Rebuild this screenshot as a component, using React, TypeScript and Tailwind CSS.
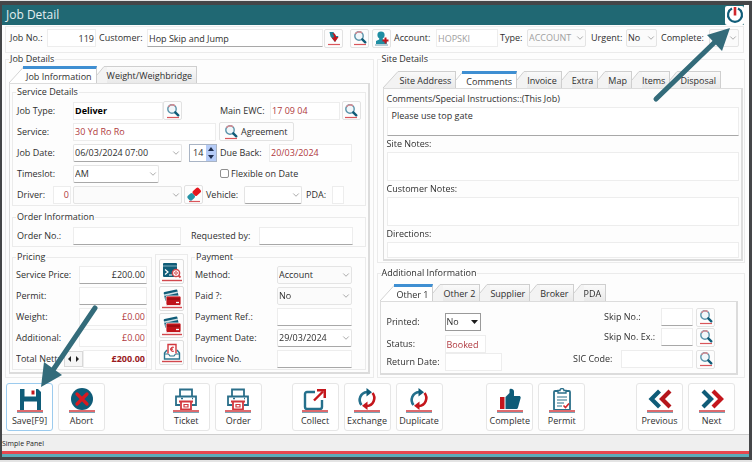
import React from "react";
import { ChevronDown } from "lucide-react";

type Kids = { children?: React.ReactNode };

const TEAL = "#0f5c78";
const RED = "#c4161c";

/* ---------- icons ---------- */

function SearchIcon() {
  return (
    <svg viewBox="0 0 16 16" className="h-4 w-4" fill="none" aria-hidden="true">
      <circle cx="7" cy="6" r="4.200" stroke="#5b93aa" strokeWidth="1.400" fill="#f1f7fa" />
      <path d="M3.500 3.800A4.200 4.200 0 0 1 10 3" stroke="#d98a90" strokeWidth="1.400" />
      <path d="M10.300 9.300l3 3" stroke={TEAL} strokeWidth="2.400" strokeLinecap="round" />
      <path d="M2 14.500h12" stroke="#d9565b" strokeWidth="1.200" />
    </svg>
  );
}

function DownArrowIcon() {
  return (
    <svg viewBox="0 0 16 16" className="h-4 w-4" aria-hidden="true">
      <path d="M3.500 2h4l2 4h3L9 12 4.500 6.500z" fill="#1b8296" />
      <path d="M6 3c3 0 4 2 4 4h2.500L9 12 5.500 7.500H8C8 5.500 7.500 4 6 3z" fill={RED} />
      <path d="M2 14.500h12" stroke="#d9565b" strokeWidth="1.200" />
    </svg>
  );
}

function PersonIcon() {
  return (
    <svg viewBox="0 0 16 16" className="h-4 w-4" aria-hidden="true">
      <circle cx="7" cy="5" r="3.600" fill="#1f8ea3" />
      <path d="M5.200 7h3.600v2.500l4 1.500v3H2v-3l3.200-1.500z" fill="#1f8ea3" />
      <path d="M11.500 7.500v6M8.500 10.500h6" stroke={RED} strokeWidth="2" />
      <path d="M1 15h13" stroke="#6f9fb0" strokeWidth="1" />
    </svg>
  );
}

function EraserIcon() {
  return (
    <svg viewBox="0 0 16 16" className="h-4 w-4" aria-hidden="true">
      <g transform="rotate(-42 8 7)">
        <rect x="0.500" y="4.200" width="7" height="6" rx="1.800" fill="#2593a6" />
        <rect x="7.500" y="4.200" width="8" height="6" rx="1.800" fill="#e5161d" />
      </g>
      <path d="M3 14.500h11" stroke="#d9565b" strokeWidth="1.200" />
    </svg>
  );
}

function PowerIcon() {
  return (
    <svg viewBox="0 0 18 18" className="h-[18px] w-[18px]" fill="none" aria-hidden="true">
      <path d="M6 2.500a7 7 0 1 0 6 0" stroke={TEAL} strokeWidth="2.200" />
      <path d="M9 1v8.500" stroke="#d0262c" strokeWidth="2.600" />
    </svg>
  );
}

function TerminalIcon() {
  return (
    <svg viewBox="0 0 22 22" className="h-[22px] w-[22px]" fill="none" aria-hidden="true">
      <rect x="2" y="2" width="14" height="14" rx="1" fill={TEAL} />
      <path d="M2 5h14" stroke="#9cc3d0" strokeWidth="0.800" />
      <path d="M4 8.500l3 2.500-3 2.500M8 14h3" stroke="#fff" strokeWidth="1.200" />
      <circle cx="15" cy="12" r="3.600" fill="#fff" stroke="#d2474d" strokeWidth="1.500" />
      <circle cx="15" cy="12" r="1.300" stroke="#d2474d" strokeWidth="1" />
      <path d="M17.500 14.500l2 2" stroke="#d2474d" strokeWidth="1.800" />
      <path d="M1 19.500h20" stroke="#d2474d" strokeWidth="1.400" />
    </svg>
  );
}

function CardsIcon() {
  return (
    <svg viewBox="0 0 22 22" className="h-[22px] w-[22px]" fill="none" aria-hidden="true">
      <g transform="rotate(-12 9 6)">
        <rect x="3" y="3" width="14" height="9" rx="1" fill={TEAL} />
        <path d="M3 6h14" stroke="#cfe2e8" strokeWidth="1.600" />
      </g>
      <rect x="5" y="8" width="15" height="9.500" rx="1.500" fill="#c0141b" stroke="#fff" strokeWidth="0.800" />
      <path d="M6 11h13" stroke="#8d0b10" strokeWidth="1.200" />
      <path d="M15 14.500h3" stroke="#fff" strokeWidth="1.300" />
      <path d="M1 19.500h20" stroke="#d2474d" strokeWidth="1.400" />
    </svg>
  );
}

function InvoiceTrayIcon() {
  return (
    <svg viewBox="0 0 22 22" className="h-[22px] w-[22px]" fill="none" aria-hidden="true">
      <path d="M6 8L3.500 11v6h15v-6L16 8" stroke="#2b7690" strokeWidth="1.400" />
      <path d="M3.500 12h4l1.500 2h4l1.500-2h4" stroke="#2b7690" strokeWidth="1.200" />
      <path d="M7 11.500V2.500h8v9" stroke="#d2373d" strokeWidth="1.400" fill="#fff" />
      <path d="M12.800 5.500a2 2 0 1 0 0 3.500M9 7.200h3" stroke="#d2373d" strokeWidth="1.200" />
      <path d="M1 19.500h20" stroke="#d2474d" strokeWidth="1.400" />
    </svg>
  );
}

function SaveGlyph() {
  return (
    <>
      <path d="M3 1h18l3 3v18H3z" fill={TEAL} />
      <path d="M7.500 1h11.500v7.500H7.500z" fill="#fff" />
      <path d="M14.500 2.500h3v4h-3z" fill={RED} />
      <path d="M7 13.500h13V22H7z" fill="#fff" />
    </>
  );
}

function AbortGlyph() {
  return (
    <>
      <circle cx="13" cy="11" r="11" fill={TEAL} />
      <path d="M8 6l10 10M18 6L8 16" stroke="#d81a20" strokeWidth="3.200" strokeLinecap="round" />
    </>
  );
}

function PrinterGlyph() {
  return (
    <>
      <path d="M7 8V1.500h12V8" stroke="#2b6f8a" strokeWidth="1.800" />
      <path d="M7 17H3V8.500h20V17h-4" stroke="#2b6f8a" strokeWidth="1.800" />
      <path d="M8 10.500h2M19 10.500h1" stroke="#2b6f8a" strokeWidth="1.400" />
      <path d="M6 13.500h14M8 13.500v8h10v-8" stroke="#d2373d" strokeWidth="1.800" />
      <path d="M11 16.500h4v2.500h-4z" stroke="#d2373d" strokeWidth="1.200" />
    </>
  );
}

function CollectGlyph() {
  return (
    <>
      <path d="M13 4H5a2 2 0 0 0-2 2v13a2 2 0 0 0 2 2h13a2 2 0 0 0 2-2v-7" stroke="#25708c" strokeWidth="2.400" />
      <path d="M12 12.500L21 3.500" stroke={RED} strokeWidth="2.400" />
      <path d="M15 1h9v9h-2.500V3.500H15z" fill={RED} />
    </>
  );
}

function CycleGlyph() {
  return (
    <>
      <path d="M7.500 17A8 8 0 0 1 13 4h2" stroke="#25708c" strokeWidth="2.600" />
      <path d="M12.500 0l5.500 4.200-5.500 4.300z" fill={TEAL} />
      <path d="M18.500 5A8 8 0 0 1 13 18h-2" stroke={RED} strokeWidth="2.600" />
      <path d="M13.500 13.500L8 17.800l5.500 4.200z" fill={RED} />
    </>
  );
}

function ThumbGlyph() {
  return (
    <>
      <path d="M3 9h4.500v12H3z" fill={RED} />
      <path d="M8.500 9l4-4V2c0-2 4.500-1.500 4.500 1.500V8h5c1.500 0 2 1.200 1.500 2.500l-2.500 9c-.3 1-1 1.500-2 1.500H8.500z" fill={TEAL} />
    </>
  );
}

function ClipboardGlyph() {
  return (
    <>
      <rect x="5" y="3" width="16" height="19" rx="1" stroke="#2b6f8a" strokeWidth="1.800" />
      <path d="M9 5V2.500h2a2 2 0 0 1 4 0h2V5z" stroke="#2b6f8a" strokeWidth="1.400" fill="#fff" />
      <path d="M8 9h10M8 12h10M8 15h7M8 18h5" stroke="#2b6f8a" strokeWidth="1.200" />
      <path d="M14.500 17.500l2 2 3.500-4" stroke="#d2262c" strokeWidth="1.600" />
    </>
  );
}

function PreviousGlyph() {
  return (
    <>
      <path d="M12.500 3L4.500 11l8 8" stroke={TEAL} strokeWidth="4.200" />
      <path d="M23 3l-8 8 8 8" stroke="#b5151b" strokeWidth="4.200" />
    </>
  );
}

function NextGlyph() {
  return (
    <>
      <path d="M4 3l8 8-8 8" stroke={TEAL} strokeWidth="4.200" />
      <path d="M14 3l8 8-8 8" stroke="#c4161c" strokeWidth="4.200" />
    </>
  );
}

/* ---------- form parts ---------- */

function Group({ title, className = "", children }: Kids & { title: string; className?: string }) {
  return (
    <fieldset className={`min-w-0 border border-[#ebebeb] ${className}`}>
      <legend className="ml-[3px] px-px leading-[12px]">{title}</legend>
      {children}
    </fieldset>
  );
}

type FieldProps = {
  id: string;
  label?: string;
  value?: string;
  className?: string;
  tone?: string;
  line?: boolean;
};

function Field({ id, label, value = "", tone = "", line = false }: FieldProps) {
  return (
    <input
      id={id}
      aria-label={label}
      defaultValue={value}
      className={`h-[18px] min-w-0 border border-[#ededed] bg-white px-px outline-none ${
        line ? "border-b-[#a8a8a8]" : ""
      } ${tone}`}
    />
  );
}

function TextField(props: FieldProps) {
  return (
    <div className={`flex min-w-0 ${props.className ?? ""}`}>
      <Field {...props} tone={`w-full ${props.tone ?? ""}`} />
    </div>
  );
}

function Drop({ id, label, value = "", className = "", tone = "", line = false }: FieldProps) {
  return (
    <div className={`relative min-w-0 ${className}`}>
      <select
        id={id}
        aria-label={label}
        defaultValue={value}
        className={`block h-[18px] w-full appearance-none rounded-[2px] border border-[#e4e4e4] pl-px pr-1 outline-none ${
          line ? "border-b-[#a8a8a8] bg-white" : "bg-[#fbfbfb]"
        } ${tone}`}
      >
        <option>{value}</option>
      </select>
      <ChevronDown className="pointer-events-none absolute right-px top-1 h-[10px] w-[10px] text-[#9a9a9a]" strokeWidth={2} />
    </div>
  );
}

function IconButton({ label, children }: Kids & { label: string }) {
  return (
    <button
      type="button"
      aria-label={label}
      className="flex h-[19px] w-[19px] shrink-0 items-center justify-center rounded-[2px] border border-[#e2e2e2] bg-[#fdfdfd]"
    >
      {children}
    </button>
  );
}

function PayButton({ label, children }: Kids & { label: string }) {
  return (
    <button
      type="button"
      aria-label={label}
      className="flex h-[25px] w-[25px] items-center justify-center rounded-[2px] border border-[#dedede] bg-[#fdfdfd]"
    >
      {children}
    </button>
  );
}

function Tabs({ names, active, label }: { names: string[]; active: string; label: string }) {
  return (
    <div role="tablist" aria-label={label} className="flex h-[17px]">
      {names.map((name, i) => {
        const on = name === active;
        return (
          <button key={name} type="button" role="tab" aria-selected={on} className="flex h-[17px]">
            <svg
              viewBox={i === 0 ? "0 0 17 17" : "0 0 10 17"}
              className={i === 0 ? "h-[17px] w-[17px]" : "h-[17px] w-[10px]"}
              aria-hidden="true"
            >
              <path d={i === 0 ? "M0 17L15 1h2v16z" : "M0 17V9L7 1h3v16z"} fill={on ? "#fff" : "#f3f3f3"} />
              <path
                d={i === 0 ? "M0 17L15 0.500h2" : "M0 9L7 0.500h3"}
                stroke={on ? "#d4d4d4" : "#d0d0d0"}
                fill="none"
              />
              {on && <path d={i === 0 ? "M14 1.500h3" : "M6 1.500h4"} stroke="#3f8fd2" strokeWidth="3" />}
            </svg>
            <span
              className={`h-[17px] border-r border-[#cfcfcf] pr-[4px] ${
                on
                  ? "border-t-[3px] border-t-[#3f8fd2] bg-white leading-[15px]"
                  : "border-t bg-linear-to-b from-[#fafafa] to-[#e9e9e9] leading-[18px]"
              }`}
            >
              {name}
            </span>
          </button>
        );
      })}
    </div>
  );
}

function Memo({ id, label, value = "", last = false, line = false }: { id: string; label: string; value?: string; last?: boolean; line?: boolean }) {
  return (
    <>
      <label htmlFor={id} className="block h-4 leading-[16px]">
        {label}
      </label>
      <textarea
        id={id}
        defaultValue={value}
        className={`block w-full resize-none border border-[#ededed] bg-white px-1 py-[2px] leading-[12px] outline-none ${
          last ? "h-4" : "h-[29px]"
        } ${line ? "border-b-[#a8a8a8]" : ""}`}
      />
    </>
  );
}

function Tool({ label, focus = false, children }: Kids & { label: string; focus?: boolean }) {
  return (
    <button
      type="button"
      className={`flex h-[48px] w-[47px] shrink-0 flex-col items-center rounded-[3px] border bg-white pt-1 ${
        focus ? "border-[#9ccbee]" : "border-[#e6e6e6]"
      }`}
    >
      <svg viewBox="0 0 26 22" className="h-[22px] w-[26px]" fill="none" aria-hidden="true">
        {children}
      </svg>
      <span className="h-[3px] w-[26px] border-b border-t-2 border-b-[#7aa7b8] border-t-[#dc6a6e]" />
      <span className="leading-[15px]">{label}</span>
    </button>
  );
}

const row = "flex h-[21px] items-center";
const red = "text-[#b03a40]";

function ServiceDetails() {
  return (
    <Group title="Service Details">
      <div className="px-1 pt-[2px]">
        <div className={row}>
          <div className="flex w-[203px] shrink-0 items-center">
            <label htmlFor="job-type" className="w-[56px]">Job Type:</label>
            <TextField id="job-type" value="Deliver" className="w-[90px]" tone="font-bold text-black" />
            <IconButton label="Find job type"><SearchIcon /></IconButton>
          </div>
          <label htmlFor="ewc" className="w-[50px] shrink-0">Main EWC:</label>
          <TextField id="ewc" value="17 09 04" className="mr-[2px] flex-1" tone={red} />
          <IconButton label="Find EWC"><SearchIcon /></IconButton>
        </div>
        <div className={row}>
          <label htmlFor="service" className="w-[56px]">Service:</label>
          <TextField id="service" value="30 Yd Ro Ro" className="mr-[3px] w-[143px]" tone={red} />
          <button type="button" className="flex h-[19px] w-[75px] items-center gap-[2px] rounded-[2px] border border-[#e2e2e2] bg-[#fdfdfd] pl-[3px]">
            <SearchIcon />
            Agreement
          </button>
        </div>
        <div className={row}>
          <div className="flex w-[203px] shrink-0 items-center">
            <label htmlFor="job-date" className="w-[56px]">Job Date:</label>
            <Drop id="job-date" value="06/03/2024 07:00" className="mr-[7px] w-[109px]" line />
            <div className="flex h-[18px] w-[28px] border border-[#a9b4c4]">
              <input aria-label="Days on hire" defaultValue="14" className="w-4 min-w-0 bg-white pl-[3px] outline-none" />
              <div className="flex flex-1 flex-col bg-[#b6ccf7]">
                <button type="button" aria-label="More days" className="flex flex-1 items-center justify-center">
                  <svg viewBox="0 0 6 4" className="h-1 w-[6px]"><path d="M3 0l3 4H0z" fill="#1d2c4d" /></svg>
                </button>
                <button type="button" aria-label="Fewer days" className="flex flex-1 items-center justify-center">
                  <svg viewBox="0 0 6 4" className="h-1 w-[6px]"><path d="M3 4l3-4H0z" fill="#1d2c4d" /></svg>
                </button>
              </div>
            </div>
          </div>
          <label htmlFor="due" className="w-[49px] shrink-0">Due Back:</label>
          <TextField id="due" value="20/03/2024" className="w-[83px]" tone={red} />
        </div>
        <div className={row}>
          <div className="flex w-[203px] shrink-0 items-center">
            <label htmlFor="slot" className="w-[56px]">Timeslot:</label>
            <Drop id="slot" value="AM" className="w-[86px]" line />
          </div>
          <label className="flex items-center gap-[2px]">
            <input type="checkbox" className="h-[9px] w-[9px] appearance-none rounded-[2px] border border-[#8f8f8f] bg-white" />
            Flexible on Date
          </label>
        </div>
        <div className={row}>
          <label htmlFor="driver" className="w-9 shrink-0">Driver:</label>
          <TextField id="driver" value="0" className="mr-[2px] w-[18px]" tone={`text-right ${red}`} />
          <Drop id="driver-name" label="Driver name" className="mr-[2px] w-[109px] shrink-0" />
          <IconButton label="Clear driver"><EraserIcon /></IconButton>
          <label htmlFor="vehicle" className="ml-[3px] w-[38px] shrink-0">Vehicle:</label>
          <Drop id="vehicle" className="mr-1 w-[58px]" line />
          <label htmlFor="pda" className="w-[26px] shrink-0">PDA:</label>
          <TextField id="pda" className="w-3" />
        </div>
      </div>
    </Group>
  );
}

function Pricing() {
  const lines: [string, string, string, boolean, string][] = [
    ["service-price", "Service Price:", "£200.00", true, ""],
    ["permit", "Permit:", "", true, ""],
    ["weight", "Weight:", "£0.00", false, red],
    ["additional", "Additional:", "£0.00", false, red],
  ];
  return (
    <Group title="Pricing" className="w-[140px] shrink-0">
      <div className="pl-[3px] pr-1 pt-px">
        {lines.map(([id, label, value, line, tone]) => (
          <div key={id} className={row}>
            <label htmlFor={id} className="w-[63px] shrink-0 whitespace-nowrap">{label}</label>
            <TextField id={id} value={value} className="flex-1" line={line} tone={`text-right ${tone}`} />
          </div>
        ))}
        <div className={row}>
          <label htmlFor="total" className="w-12 shrink-0 overflow-hidden whitespace-nowrap">Total Nett:</label>
          <div className="flex h-4 w-[19px] shrink-0 border border-[#d8d8d8] bg-[#f6f6f6]">
            <button type="button" aria-label="Back" className="flex flex-1 items-center justify-center">
              <svg viewBox="0 0 3 6" className="h-[6px] w-[3px]"><path d="M3 0v6L0 3z" fill="#222" /></svg>
            </button>
            <button type="button" aria-label="Forward" className="flex flex-1 items-center justify-center">
              <svg viewBox="0 0 3 6" className="h-[6px] w-[3px]"><path d="M0 0v6l3-3z" fill="#222" /></svg>
            </button>
          </div>
          <TextField id="total" value="£200.00" className="flex-1" tone="text-right font-bold text-[#9a1b22]" />
        </div>
      </div>
    </Group>
  );
}

function Payment() {
  const label = "w-[82px] shrink-0";
  return (
    <Group title="Payment" className="flex-1">
      <div className="pl-[3px] pr-[13px] pt-px">
        <div className={row}>
          <label htmlFor="method" className={label}>Method:</label>
          <Drop id="method" value="Account" className="flex-1" />
        </div>
        <div className={row}>
          <label htmlFor="paid" className={label}>Paid ?:</label>
          <Drop id="paid" value="No" className="flex-1" />
        </div>
        <div className={row}>
          <label htmlFor="payref" className={label}>Payment Ref.:</label>
          <TextField id="payref" className="flex-1" line />
        </div>
        <div className={row}>
          <label htmlFor="paydate" className={label}>Payment Date:</label>
          <Drop id="paydate" value="29/03/2024" className="flex-1" line />
        </div>
        <div className={row}>
          <label htmlFor="invno" className={label}>Invoice No.</label>
          <TextField id="invno" className="flex-1" line />
        </div>
      </div>
    </Group>
  );
}

function JobDetails() {
  return (
    <Group title="Job Details">
      <div className="px-[3px] pb-[3px] pt-px">
        <Tabs label="Job" names={["Job Information", "Weight/Weighbridge"]} active="Job Information" />
        <div className="border border-b-2 border-r-2 border-[#dcdcdc] px-[2px] pb-[2px] pt-[2px]">
          <ServiceDetails />
          <Group title="Order Information" className="mt-[5px]">
            <div className="px-1 pt-[2px]">
              <div className={row}>
                <label htmlFor="order-no" className="w-[56px] shrink-0">Order No.:</label>
                <TextField id="order-no" className="mr-[10px] w-[108px]" line />
                <label htmlFor="requested" className="w-[68px] shrink-0">Requested by:</label>
                <TextField id="requested" className="mr-2 flex-1" line />
              </div>
            </div>
          </Group>
          <div className="mt-1 flex gap-[3px]">
            <Pricing />
            <div className="mt-[3px] flex flex-col items-center justify-between border border-[#ebebeb] px-[3px] py-1">
              <PayButton label="Price lookup"><TerminalIcon /></PayButton>
              <PayButton label="Card payment"><CardsIcon /></PayButton>
              <PayButton label="Card refund"><CardsIcon /></PayButton>
              <PayButton label="Email invoice"><InvoiceTrayIcon /></PayButton>
            </div>
            <Payment />
          </div>
        </div>
      </div>
    </Group>
  );
}

function SiteDetails() {
  return (
    <Group title="Site Details">
      <div className="pb-px pl-[5px] pr-px pt-[6px]">
        <Tabs
          label="Site"
          names={["Site Address", "Comments", "Invoice", "Extra", "Map", "Items", "Disposal"]}
          active="Comments"
        />
        <div className="border border-b-2 border-r-2 border-[#dcdcdc] pb-px pl-[3px] pr-[2px] pt-[2px]">
          <Memo id="comments" label="Comments/Special Instructions::(This Job)" value="Please use top gate" line />
          <Memo id="site-notes" label="Site Notes:" />
          <Memo id="customer-notes" label="Customer Notes:" />
          <Memo id="directions" label="Directions:" last />
        </div>
      </div>
    </Group>
  );
}

function AdditionalInformation() {
  return (
    <Group title="Additional Information" className="flex-1">
      <div className="pl-[2px] pr-[6px] pt-[5px]">
        <Tabs label="Additional" names={["Other 1", "Other 2", "Supplier", "Broker", "PDA"]} active="Other 1" />
        <div className="flex justify-between border border-b-2 border-r-2 border-[#dcdcdc] pb-[2px] pl-[6px] pr-[21px]">
          <div className="flex flex-col pt-[9px]">
            <div className="mb-[2px] flex h-[22px] items-center">
              <label htmlFor="printed" className="w-[58px]">Printed:</label>
              <div className="relative w-9">
                <select id="printed" className="block h-[18px] w-full appearance-none border border-[#9a9a9a] bg-white pl-px outline-none">
                  <option>No</option>
                </select>
                <svg viewBox="0 0 7 4" className="pointer-events-none absolute right-[3px] top-[7px] h-1 w-[7px]">
                  <path d="M0 0h7L3.500 4z" fill="#1c1c1c" />
                </svg>
              </div>
            </div>
            <div className="flex h-[18px] items-center">
              <label htmlFor="status" className="w-[58px]">Status:</label>
              <TextField id="status" value="Booked" className="w-[41px]" tone={red} />
            </div>
            <div className="flex h-[18px] items-center">
              <label htmlFor="return" className="w-[58px] whitespace-nowrap">Return Date:</label>
              <TextField id="return" className="w-[57px]" />
            </div>
          </div>
          <div className="flex flex-col items-end pt-[5px]">
            <div className="flex h-5 items-center">
              <label htmlFor="skip" className="w-[57px]">Skip No.:</label>
              <TextField id="skip" className="mr-[3px] w-8" line />
              <IconButton label="Find skip"><SearchIcon /></IconButton>
            </div>
            <div className="mb-[2px] flex h-5 items-center">
              <label htmlFor="skipex" className="w-[57px] whitespace-nowrap">Skip No. Ex.:</label>
              <TextField id="skipex" className="mr-[3px] w-8" line />
              <IconButton label="Find exchange skip"><SearchIcon /></IconButton>
            </div>
            <div className="flex h-5 items-center">
              <label htmlFor="sic" className="w-[48px]">SIC Code:</label>
              <TextField id="sic" className="mr-[3px] w-[72px]" />
              <IconButton label="Find SIC code"><SearchIcon /></IconButton>
            </div>
          </div>
        </div>
      </div>
    </Group>
  );
}

function Header() {
  return (
    <div className="mr-px mt-px flex h-[27px] items-center border border-[#ebebeb] pb-[3px] pl-1 pr-1">
      <label htmlFor="job-no" className="w-[37px] shrink-0 whitespace-nowrap">Job No.:</label>
      <TextField id="job-no" value="119" className="mr-[3px] w-[49px] shrink-0" tone="text-right" />
      <label htmlFor="customer" className="w-[48px] shrink-0">Customer:</label>
      <TextField id="customer" value="Hop Skip and Jump" className="mr-px flex-1" line />
      <IconButton label="Pick customer"><DownArrowIcon /></IconButton>
      <span className="w-[7px]" />
      <IconButton label="Find customer"><SearchIcon /></IconButton>
      <span className="w-[3px]" />
      <IconButton label="Add customer"><PersonIcon /></IconButton>
      <label htmlFor="account" className="ml-[3px] w-[42px] shrink-0">Account:</label>
      <TextField id="account" value="HOPSKI" className="mr-[2px] w-[62px] shrink-0" tone="text-[#a0a0a0]" />
      <label htmlFor="type" className="w-[27px] shrink-0">Type:</label>
      <Drop id="type" value="ACCOUNT" className="mr-[5px] w-[59px] shrink-0" tone="text-[#a0a0a0]" />
      <label htmlFor="urgent" className="w-[35px] shrink-0">Urgent:</label>
      <Drop id="urgent" value="No" className="mr-1 w-[31px] shrink-0" />
      <label htmlFor="complete" className="w-12 shrink-0">Complete:</label>
      <Drop id="complete" className="w-[30px] shrink-0" />
    </div>
  );
}

function Toolbar() {
  return (
    <div className="flex pb-[3px] pl-1 pr-[14px] pt-[5px]">
      <div className="flex gap-[5px]">
        <Tool label="Save[F9]" focus><SaveGlyph /></Tool>
        <Tool label="Abort"><AbortGlyph /></Tool>
      </div>
      <div className="grow-58" />
      <div className="flex gap-[5px]">
        <Tool label="Ticket"><PrinterGlyph /></Tool>
        <Tool label="Order"><PrinterGlyph /></Tool>
      </div>
      <div className="grow-30" />
      <div className="flex gap-[5px]">
        <Tool label="Collect"><CollectGlyph /></Tool>
        <Tool label="Exchange"><CycleGlyph /></Tool>
        <Tool label="Duplicate"><CycleGlyph /></Tool>
      </div>
      <div className="grow-44" />
      <div className="flex gap-[5px]">
        <Tool label="Complete"><ThumbGlyph /></Tool>
        <Tool label="Permit"><ClipboardGlyph /></Tool>
      </div>
      <div className="grow-51" />
      <div className="flex gap-[5px]">
        <Tool label="Previous"><PreviousGlyph /></Tool>
        <Tool label="Next"><NextGlyph /></Tool>
      </div>
    </div>
  );
}

export default function App() {
  return (
    <div className="bg-[#e4e4e4] pb-[2px] pt-px font-['Open_Sans','Noto_Sans',sans-serif] text-[9px] leading-[12px] text-[#2f2f2f]">
      <main className="relative border-b-[3px] border-l-2 border-r-[3px] border-t-4 border-[#454648] bg-[#fdfdfd]">
        <header className="mr-[5px] flex h-5 items-center justify-between bg-[#206873] pl-1">
          <h1 className="text-[12px] leading-[18px] text-[#e4eff1]">Job Detail</h1>
          <button type="button" aria-label="Close" className="flex h-[19px] w-[19px] items-center justify-center rounded-[2px] bg-white">
            <PowerIcon />
          </button>
        </header>

        <div className="pl-[3px] pr-1">
          <Header />
          <div className="grid grid-cols-2 gap-[3px]">
            <JobDetails />
            <div className="flex min-w-0 flex-col gap-1">
              <SiteDetails />
              <AdditionalInformation />
            </div>
          </div>
        </div>

        <Toolbar />

        <footer>
          <div className="h-[17px] border-t border-[#cdcdcd] bg-[#efefef] text-[7px] leading-[17px] text-[#222]">Simple Panel</div>
          <div className="h-[6px] border-b-[3px] border-t-[3px] border-b-[#5cacb9] border-t-[#e8474e]" />
        </footer>

        <svg viewBox="0 0 84 80" className="pointer-events-none absolute right-[14px] top-5 h-20 w-[84px]" aria-hidden="true">
          <path d="M5 74L66 15" stroke="#336b7a" strokeWidth="5" strokeLinecap="round" />
          <path d="M79 3L56 10l15 16z" fill="#336b7a" />
        </svg>
        <svg viewBox="0 0 64 90" className="pointer-events-none absolute left-9 top-[299px] h-[90px] w-16" aria-hidden="true">
          <path d="M57 4L13 69" stroke="#336b7a" strokeWidth="5" strokeLinecap="round" />
          <path d="M3 83L6 58l18 13z" fill="#336b7a" />
        </svg>
      </main>
    </div>
  );
}
